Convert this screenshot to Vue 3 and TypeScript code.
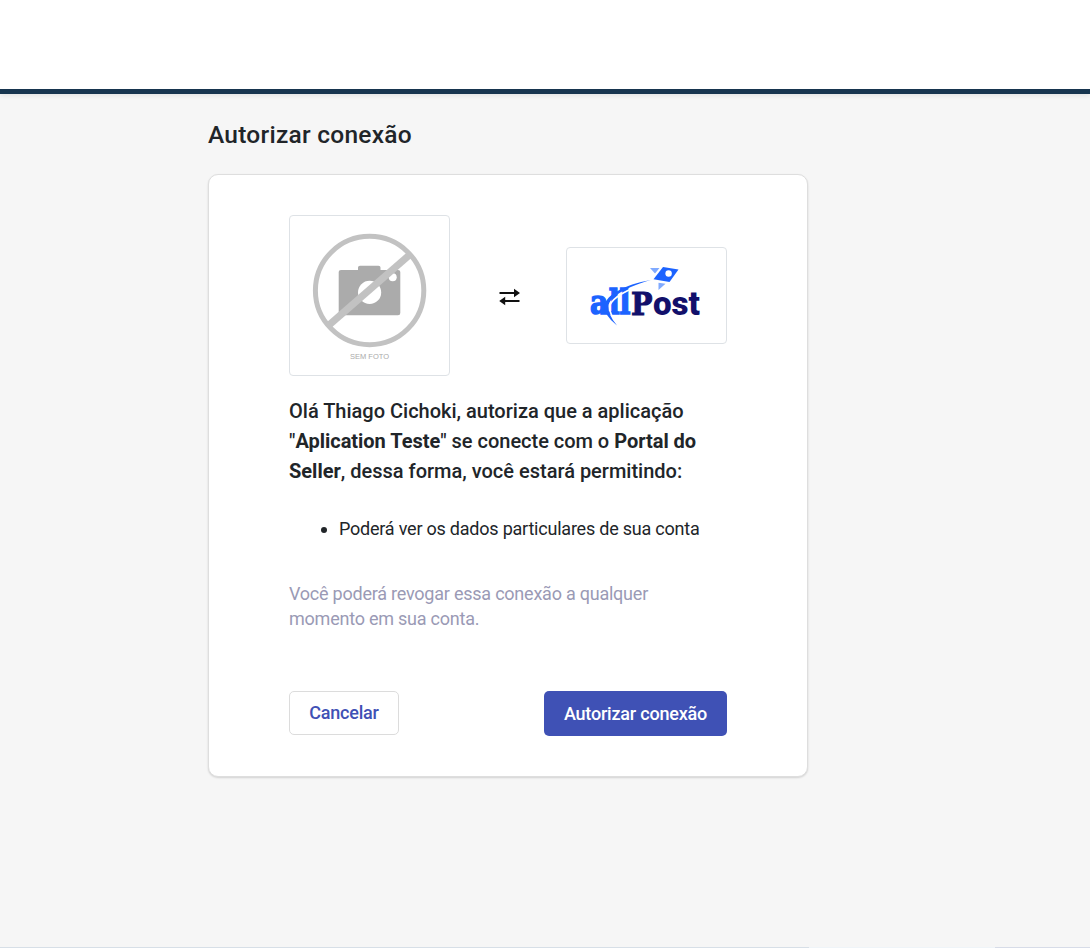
<script setup lang="ts">
const user: string = 'Thiago Cichoki'
const application: string = 'Aplication Teste'
const permissions: string[] = ['Poderá ver os dados particulares de sua conta']
</script>

<template>
  <div class="page">
    <header class="topbar"></header>
    <main class="content">
      <h1>Autorizar conexão</h1>
      <section class="card">
        <div class="apps">
          <div class="thumb photo">
            <svg viewBox="290 216 159 159" width="159" height="159">
              <path fill="#ababab" d="M341 270H358V267.500Q358 265.700 360 265.700H378.500Q380.500 265.700 380.500 267.500V270H398Q400.300 270 400.300 272V313Q400.300 315.300 398 315.300H341Q338.700 315.300 338.700 313V272Q338.700 270 341 270Z" />
              <circle cx="369.600" cy="292.400" r="11.600" fill="#fff" />
              <circle cx="392.700" cy="277.300" r="4" fill="#fff" />
              <circle cx="369.600" cy="290.500" r="54.200" fill="none" stroke="#c2c2c2" stroke-width="5" />
              <path d="M328.500 325.500 410.500 254" stroke="#c2c2c2" stroke-width="7" />
              <text x="350" y="359.300" textLength="39" lengthAdjust="spacingAndGlyphs" class="caption">SEM FOTO</text>
            </svg>
          </div>
          <svg class="swap" viewBox="0 0 22 18" width="22" height="18">
            <path d="M.5 5H16.500M20.500 13H4.500" fill="none" stroke="#111" stroke-width="2" />
            <path d="M15 .8 21 5 15 9.200ZM6.200 8.800 .2 13 6.200 17.200Z" fill="#111" />
          </svg>
          <div class="thumb logo">
            <svg viewBox="567 248 159 95" width="159" height="95">
              <text x="590" y="314.400" textLength="40.500" lengthAdjust="spacingAndGlyphs" class="slab all">all</text>
              <text x="631" y="314.600" textLength="21.500" lengthAdjust="spacingAndGlyphs" class="slab post">P</text>
              <text x="653" y="314.700" textLength="47" lengthAdjust="spacingAndGlyphs" class="ost">ost</text>
              <path d="M651 282.500C626 289 612 298 609.500 306Q609 314 618 325" fill="none" stroke="#fff" stroke-width="1.600" />
              <path d="M651 280C623 285 607 295 604.500 305Q603.500 315 617 325.500Q608 315 608.500 306C609.500 297 626 287 651 280Z" fill="#1c63ff" />
              <path d="M663 267 678.500 269.500 669.500 282 653.500 279.300Z" fill="#1c63ff" />
              <circle cx="668.600" cy="273.500" r="3.200" fill="#fff" />
              <path d="M650 268H659.500L655 273.500ZM658.500 282.700 665.500 283.700 658.500 290Z" fill="#80aaff" />
            </svg>
          </div>
        </div>
        <p class="message">
          <span>Olá {{ user }}, autoriza que a aplicação</span><br />
          <span class="tight">"<b>{{ application }}</b>" se conecte com o <b>Portal do</b></span><br />
          <span><b>Seller</b>, dessa forma, você estará permitindo:</span>
        </p>
        <ul>
          <li v-for="permission in permissions" :key="permission">{{ permission }}</li>
        </ul>
        <p class="note">
          <span>Você poderá revogar essa conexão a qualquer</span><br />
          <span>momento em sua conta.</span>
        </p>
        <div class="actions">
          <button type="button" class="cancel">Cancelar</button>
          <button type="button" class="authorize">Autorizar conexão</button>
        </div>
      </section>
    </main>
    <footer class="edge"><i></i><i></i><i></i></footer>
  </div>
</template>

<style>
body {
  margin: 0;
  background: #f6f6f6;
}
</style>

<style scoped>
.page {
  box-sizing: border-box;
  display: flex;
  flex-direction: column;
  height: 948px;
  overflow: hidden;
  background: #f6f6f6;
  color: #212529;
  font-family: Roboto, "Liberation Sans", sans-serif;
}
.topbar {
  box-sizing: border-box;
  flex: none;
  height: 94px;
  background: #fff;
  border-bottom: 5px solid #17354f;
  box-shadow: 0 2px 5px rgba(0, 0, 0, 0.08);
}
.content {
  flex: 1;
  width: 600px;
  margin-left: 208px;
}
h1 {
  margin: 25px 0 24px;
  font-size: 24.5px;
  font-weight: 500;
  line-height: 31px;
  letter-spacing: 0.25px;
}
.card {
  box-sizing: border-box;
  height: 603px;
  padding: 40px 80px;
  background: #fff;
  border: 1px solid #dedede;
  border-radius: 10px;
  box-shadow: 0 1px 2px rgba(0, 0, 0, 0.15);
}
.apps {
  display: flex;
  align-items: center;
  justify-content: space-between;
  width: 438px;
  height: 161px;
}
.thumb {
  box-sizing: border-box;
  width: 161px;
  border: 1px solid #dee2e6;
  border-radius: 4px;
}
.thumb svg,
.swap {
  display: block;
}
.swap {
  margin: 3px 0 0 3px;
}
.photo {
  height: 161px;
}
.logo {
  height: 97px;
}
.caption {
  font: 8px "Liberation Sans", sans-serif;
  fill: #aaa;
}
.slab {
  font: bold 32px "DejaVu Serif", serif;
}
.all {
  font-size: 33px;
  fill: #1c63ff;
  stroke: #1c63ff;
  stroke-width: 1.5px;
}
.post,
.ost {
  fill: #12106b;
}
.post {
  stroke: #12106b;
  stroke-width: 1px;
}
.ost {
  font: 900 33px Roboto, sans-serif;
}
.message {
  margin: 20px 0 0;
  font-size: 20px;
  font-weight: 500;
  line-height: 30px;
  white-space: nowrap;
}
.message b {
  font-weight: 700;
}
.tight {
  letter-spacing: -0.02px;
}
ul {
  margin: 30px 0 0;
  padding-left: 50px;
  font-size: 18px;
  line-height: 26px;
  letter-spacing: -0.22px;
  white-space: nowrap;
}
.note {
  margin: 39px 0 0;
  color: #9a9ab5;
  font-size: 18px;
  line-height: 25px;
  letter-spacing: -0.23px;
  white-space: nowrap;
}
.actions {
  display: flex;
  align-items: flex-start;
  justify-content: space-between;
  width: 438px;
  margin-top: 60px;
}
button {
  box-sizing: border-box;
  padding: 0;
  border-radius: 5px;
  font: 500 18px Roboto, sans-serif;
  letter-spacing: -0.2px;
  white-space: nowrap;
}
.cancel {
  width: 110px;
  height: 44px;
  padding-bottom: 2px;
  border: 1px solid #dcdcdc;
  background: #fff;
  color: #3f51b5;
}
.authorize {
  width: 183px;
  height: 45px;
  border: 0;
  background: #3f51b5;
  color: #fff;
}
.edge {
  display: grid;
  flex: none;
  grid-template-columns: 809px 186px 95px;
  height: 1px;
}
.edge i {
  background: #d7dfe7;
}
.edge i:nth-child(2) {
  background: #eff4f8;
}
.edge i:nth-child(3) {
  background: #d7dce8;
}
</style>
